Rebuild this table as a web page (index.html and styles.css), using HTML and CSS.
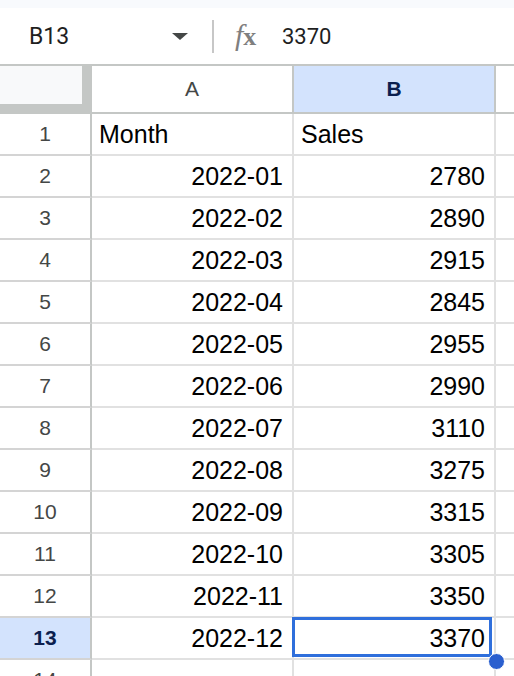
FILE: index.html
```html
<!DOCTYPE html>
<html>
<head>
<meta charset="utf-8">
<link rel="stylesheet" href="styles.css">
</head>
<body>
<div class="topstrip"></div>
<div class="fbar">
  <div class="namebox"><span class="ref">B13</span><span class="caret"></span></div>
  <div class="sep"></div>
  <div class="fx"><span class="fx-f">f</span><span class="fx-x">x</span></div>
  <div class="fval">3370</div>
</div>
<div class="sheet">
  <div class="corner"><div class="corner-in"></div></div>
  <div class="colh">A</div>
  <div class="colh active">B</div>
  <div class="colh last"></div>

  <div class="rowh">1</div><div class="cell">Month</div><div class="cell">Sales</div><div class="cell last"></div>
  <div class="rowh">2</div><div class="cell num">2022-01</div><div class="cell num">2780</div><div class="cell last"></div>
  <div class="rowh">3</div><div class="cell num">2022-02</div><div class="cell num">2890</div><div class="cell last"></div>
  <div class="rowh">4</div><div class="cell num">2022-03</div><div class="cell num">2915</div><div class="cell last"></div>
  <div class="rowh">5</div><div class="cell num">2022-04</div><div class="cell num">2845</div><div class="cell last"></div>
  <div class="rowh">6</div><div class="cell num">2022-05</div><div class="cell num">2955</div><div class="cell last"></div>
  <div class="rowh">7</div><div class="cell num">2022-06</div><div class="cell num">2990</div><div class="cell last"></div>
  <div class="rowh">8</div><div class="cell num">2022-07</div><div class="cell num">3110</div><div class="cell last"></div>
  <div class="rowh">9</div><div class="cell num">2022-08</div><div class="cell num">3275</div><div class="cell last"></div>
  <div class="rowh">10</div><div class="cell num">2022-09</div><div class="cell num">3315</div><div class="cell last"></div>
  <div class="rowh">11</div><div class="cell num">2022-10</div><div class="cell num">3305</div><div class="cell last"></div>
  <div class="rowh">12</div><div class="cell num">2022-11</div><div class="cell num">3350</div><div class="cell last"></div>
  <div class="rowh active">13</div><div class="cell num">2022-12</div><div class="cell num selected">3370<div class="selbox"></div><div class="handle"></div></div><div class="cell last"></div>
  <div class="rowh">14</div><div class="cell"></div><div class="cell"></div><div class="cell last"></div>
</div>
</body>
</html>
```

FILE: styles.css
```css
html, body {
  margin: 0;
  padding: 0;
  background: #ffffff;
  overflow: hidden;
  width: 514px;
  height: 676px;
}
body {
  font-family: "Liberation Sans", Arial, sans-serif;
}
.topstrip {
  height: 8px;
  background: #f8fafd;
}
.fbar {
  height: 56px;
  display: flex;
  align-items: center;
  padding-left: 29px;
  background: #ffffff;
}
.namebox {
  width: 159px;
  display: flex;
  align-items: center;
  justify-content: space-between;
}
.ref {
  font-family: Roboto, "Liberation Sans", sans-serif;
  font-size: 23px;
  color: #1f1f1f;
}
.caret {
  width: 0;
  height: 0;
  border-left: 8px solid transparent;
  border-right: 8px solid transparent;
  border-top: 7px solid #444746;
  margin-top: 1px;
}
.sep {
  width: 2px;
  height: 33px;
  background: #c7c7c7;
  margin-left: 24px;
}
.fx {
  margin-left: 21px;
  width: 30px;
  font-family: "Liberation Serif", serif;
  color: #7f7f7f;
  font-size: 30px;
  line-height: 1;
  display: flex;
  align-items: baseline;
  margin-top: -2px;
}
.fx-f {
  font-style: italic;
}
.fx-x {
  font-weight: bold;
  font-size: 26px;
  margin-left: 0;
}
.fval {
  margin-left: 17px;
  font-family: Roboto, "Liberation Sans", sans-serif;
  font-size: 22px;
  color: #1f1f1f;
}
.sheet {
  display: grid;
  grid-template-columns: 92px 202px 202px 1fr;
  grid-template-rows: 48px;
  grid-auto-rows: 42px;
  border-top: 2px solid #c4c7c5;
}
.corner {
  background: #c4c7c5;
}
.corner-in {
  width: 82px;
  height: 38px;
  background: #f8f9fa;
}
.colh {
  box-sizing: border-box;
  border-right: 2px solid #c4c7c5;
  border-bottom: 2px solid #c4c7c5;
  display: flex;
  align-items: center;
  justify-content: center;
  font-size: 21px;
  color: #444746;
  background: #ffffff;
}
.colh.active {
  background: #d3e3fd;
  color: #0b1f4f;
  font-weight: bold;
}
.colh.last {
  border-right: none;
}
.rowh {
  box-sizing: border-box;
  border-right: 2px solid #c4c7c5;
  border-bottom: 2px solid #d4d4d4;
  display: flex;
  align-items: center;
  justify-content: center;
  font-size: 21px;
  color: #444746;
  background: #ffffff;
}
.rowh.active {
  background: #d3e3fd;
  color: #0b1f4f;
  font-weight: bold;
}
.cell {
  box-sizing: border-box;
  border-right: 2px solid #e1e1e1;
  border-bottom: 2px solid #e1e1e1;
  display: flex;
  align-items: center;
  padding: 0 8px 0 7px;
  font-size: 25px;
  color: #000000;
  white-space: nowrap;
}
.cell.num {
  justify-content: flex-end;
  padding-right: 9px;
}
.cell.last {
  border-right: none;
}
.cell.selected {
  position: relative;
}
.selbox {
  position: absolute;
  left: -2px;
  top: -1px;
  right: 2px;
  bottom: 1px;
  border: 3px solid #2f6fdc;
}
.handle {
  position: absolute;
  left: 194px;
  top: 35px;
  width: 15px;
  height: 15px;
  border-radius: 50%;
  background: #2a5fcf;
  border: 1px solid #ffffff;
  z-index: 2;
}
```
